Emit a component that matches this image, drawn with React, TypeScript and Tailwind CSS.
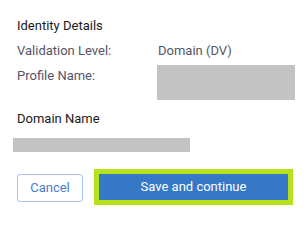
import React from "react";

export default function App() {
  return (
    <div className="w-[307px] h-[226px] bg-white overflow-hidden font-['Roboto',sans-serif] text-[13px] leading-[16px]">
      <div className="pt-[18px] pl-[17px] flex flex-col">
        <div className="text-[#1a1a1a]">Identity Details</div>
        <div className="mt-[9px] flex">
          <div className="w-[141px] text-[#555566]">Validation Level:</div>
          <div className="text-[#555566]">Domain (DV)</div>
        </div>
        <div className="mt-[6px] flex items-start">
          <div className="w-[140px] mt-[3px] text-[#555566]">Profile Name:</div>
          <div className="w-[138px] h-[35px] bg-[#c3c3c3]"></div>
        </div>
        <div className="mt-[11px] text-[#1a1a1a]">Domain Name</div>
        <div className="mt-[11px] -ml-[4px] w-[177px] h-[14px] bg-[#c3c3c3]"></div>
        <div className="mt-[17px] flex items-start">
          <button className="mt-[5px] w-[66px] h-[28px] rounded-[3px] border border-[#a6c8f0] bg-white text-[#4a7cc9] flex items-center justify-center">
            Cancel
          </button>
          <div className="ml-[11px] border-[5px] border-[#b6e21c]">
            <button className="w-[189px] h-[26px] bg-[#3478c6] text-white flex items-center justify-center">
              Save and continue
            </button>
          </div>
        </div>
      </div>
    </div>
  );
}
